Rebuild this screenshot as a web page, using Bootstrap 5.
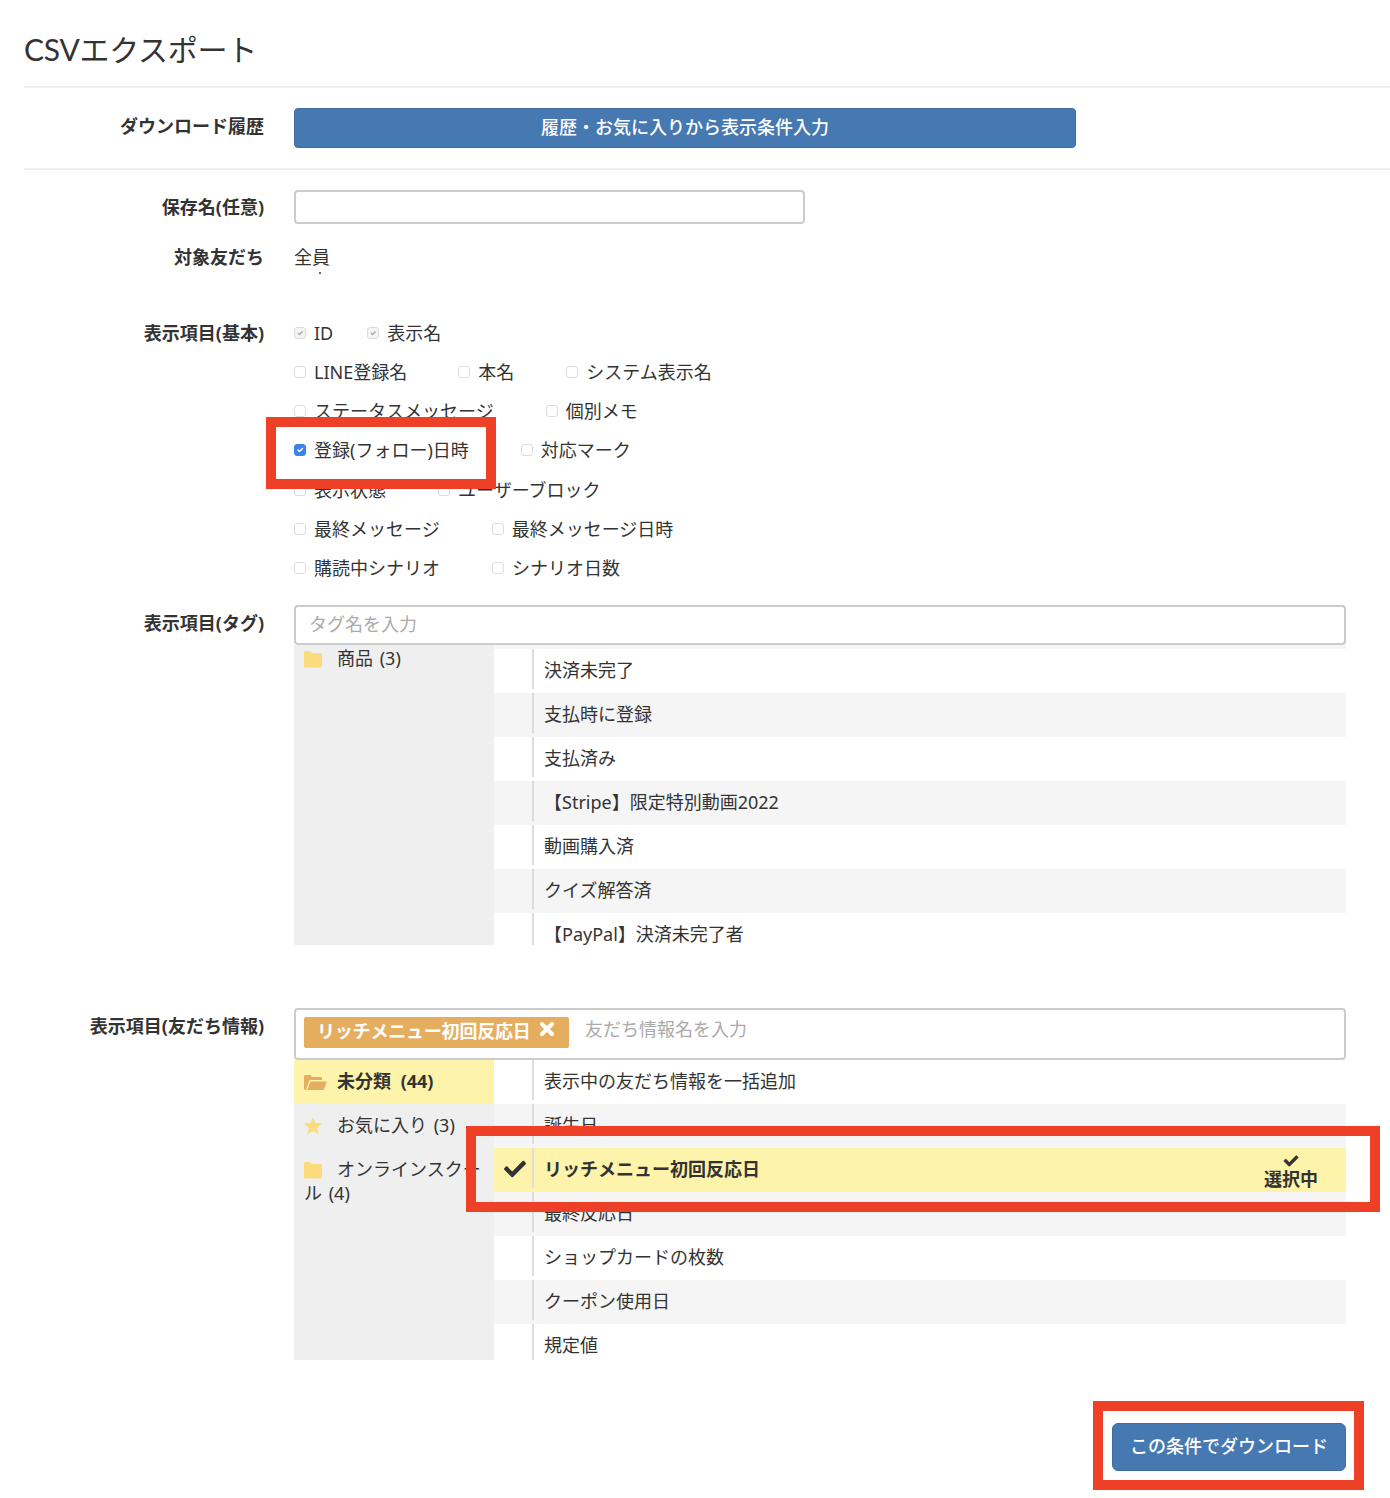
<!DOCTYPE html>
<html lang="ja">
<head>
<meta charset="utf-8">
<title>CSVエクスポート</title>
<link rel="stylesheet" href="https://cdn.jsdelivr.net/npm/bootstrap@5.3.0/dist/css/bootstrap.min.css">
<style>
html,body{margin:0;background:#fff}
body{width:1390px;height:1498px;overflow:hidden;position:relative;color:#333;font-family:"Noto Sans","Noto Sans CJK JP",sans-serif;font-size:18px;line-height:24px;padding-left:24px}
.page-title{font-size:30px;line-height:36px;font-weight:400;margin:0;padding-top:31px;height:86px;color:#333;font-family:Lato,"Noto Sans CJK JP",sans-serif;letter-spacing:-.25px}
.rule{height:2px;background:#eee;margin-right:0}
.frow{display:flex;align-items:flex-start}
.flabel{width:240px;flex:none;text-align:right;font-weight:700;margin-right:30px;color:#333}
.fbody{width:1052px;flex:none}
.row-history{margin-top:20px;margin-bottom:20px}
.row-history .flabel{padding-top:6px}
.btn-site{background:#4679b2;border:1px solid #3f6c9f;color:#fff;border-radius:4px;font-size:18px;line-height:24px;font-weight:500}
.btn-site:hover{background:#4679b2;color:#fff;border-color:#3f6c9f}
.btn-hist{display:block;width:782px;height:40px;padding:5px 0 7px;margin:0}
.row-name{margin-top:20px}
.row-name .flabel{padding-top:5px}
.input-plain{width:511px;height:34px;border:2px solid #ccc;border-radius:4px;box-shadow:none;padding:4px 10px}
.row-target{margin-top:21px;height:48px}
.tiny-dot{width:2px;height:2px;background:#666;margin:3px 0 0 25px}
.row-basic{margin-top:20px}
.row-basic .flabel{padding-top:8px}
.ck-line{height:39.25px;display:flex;align-items:center}
.ck-item{display:flex;align-items:center;margin-right:52px;white-space:nowrap}
.ck-item.tight{margin-right:34px}
.ck-item.snug{margin-right:51px}
.ck-box.form-check-input{width:12px;height:12px;margin:0 8px 0 0;flex:none;border:1px solid #ddd;border-radius:3px;background-color:#fff;opacity:1;box-shadow:none}
.ck-box.form-check-input:checked{background-color:#3b82f0;border-color:#3b82f0}
.ck-box.form-check-input:disabled{background-color:#f4f4f4;border-color:#ddd;opacity:1;background-image:url("data:image/svg+xml,%3csvg xmlns='http://www.w3.org/2000/svg' viewBox='0 0 20 20'%3e%3cpath fill='none' stroke='%23aaa' stroke-width='3' d='m6 10 3 3 6-6'/%3e%3c/svg%3e")}
.row-tags{margin-top:17.25px}
.row-tags .flabel{padding-top:6px}
.tag-input.form-control{height:40px;border:2px solid #ccc;border-radius:4px;font-size:18px;padding:3px 13px 5px;color:#333;box-shadow:none;font-family:inherit}
.tag-input.form-control::placeholder,.friend-input::placeholder{color:#aaa;opacity:1}
.pick{display:flex;height:300px;overflow:hidden}
.pick-side{width:200px;flex:none;background:#efefef}
.pick-list{flex:1;min-width:0}
.side-item{padding:9px 10px 11px;line-height:24px;color:#333;word-spacing:2px}
.side-item.first-cut{padding-top:1px}
.side-item.on{background:#fdf3ab;font-weight:700;word-spacing:5px}
.side-ico{display:inline-block;width:18px;height:18px;margin-right:15px;vertical-align:-3px}
.side-ico.wide{width:23px;margin-right:10px}
.pick-strip{height:4px;background:#f5f5f5}
.pick-row{height:44px;display:flex;background:#fff}
.pick-row.alt{background:#f5f5f5}
.pick-row.on{background:#fdf3ab;font-weight:700}
.pick-mark{width:38px;flex:none;display:flex;align-items:center;justify-content:center;height:42px;padding-left:3px}
.pick-text{flex:1;border-left:2px solid #ddd;height:40px;line-height:42px;padding-left:10px;display:flex;justify-content:space-between}
.pick-state{display:flex;flex-direction:column;align-items:center;margin-right:28px;font-size:18px;line-height:18px;padding-top:6px}
.state-tick{margin-bottom:2px}
.row-friends{margin-top:63px}
.row-friends .flabel{padding-top:6px}
.friend-box{height:52px;border:2px solid #ccc;border-radius:4px;display:flex;align-items:flex-start;padding:7px 8px}
.friend-chip{background:#e5ad5e;color:#fff;font-weight:700;border-radius:2px;height:31px;line-height:28px;padding:0 14px 0 13px;width:265px;display:flex;justify-content:space-between;white-space:nowrap;flex:none;letter-spacing:-.2px}
.friend-input{border:0;outline:0;background:none;font-size:18px;font-family:inherit;margin-left:16px;padding:0;height:24px;flex:1;min-width:0;color:#333}
.pick.tall{height:300px}
.foot{display:flex;justify-content:flex-end;width:1322px;margin-top:63px}
.btn-go{width:234px;height:48px;padding:0 0 2px;border-radius:6px}
.callout{position:absolute;border:10px solid #ee4027;pointer-events:none}
.c1{left:266px;top:417px;width:230px;height:72px}
.c2{left:466px;top:1126px;width:914px;height:86px}
.c3{left:1093px;top:1401px;width:271px;height:89px}
</style>
</head>
<body>
<h1 class="page-title">CSVエクスポート</h1>
<div class="rule"></div>

<div class="frow row-history">
  <div class="flabel">ダウンロード履歴</div>
  <div class="fbody"><button type="button" class="btn btn-site btn-hist">履歴・お気に入りから表示条件入力</button></div>
</div>
<div class="rule"></div>

<div class="frow row-name">
  <label class="flabel" for="saveName">保存名(任意)</label>
  <div class="fbody"><input id="saveName" type="text" class="form-control input-plain"></div>
</div>

<div class="frow row-target">
  <div class="flabel">対象友だち</div>
  <div class="fbody">全員<div class="tiny-dot"></div></div>
</div>

<div class="frow row-basic">
  <div class="flabel">表示項目(基本)</div>
  <div class="fbody">
    <div class="ck-line">
      <label class="ck-item tight"><input class="form-check-input ck-box" type="checkbox" checked disabled>ID</label>
      <label class="ck-item"><input class="form-check-input ck-box" type="checkbox" checked disabled>表示名</label>
    </div>
    <div class="ck-line">
      <label class="ck-item snug"><input class="form-check-input ck-box" type="checkbox">LINE登録名</label>
      <label class="ck-item"><input class="form-check-input ck-box" type="checkbox">本名</label>
      <label class="ck-item"><input class="form-check-input ck-box" type="checkbox">システム表示名</label>
    </div>
    <div class="ck-line">
      <label class="ck-item"><input class="form-check-input ck-box" type="checkbox">ステータスメッセージ</label>
      <label class="ck-item"><input class="form-check-input ck-box" type="checkbox">個別メモ</label>
    </div>
    <div class="ck-line">
      <label class="ck-item"><input class="form-check-input ck-box" type="checkbox" checked>登録(フォロー)日時</label>
      <label class="ck-item"><input class="form-check-input ck-box" type="checkbox">対応マーク</label>
    </div>
    <div class="ck-line">
      <label class="ck-item"><input class="form-check-input ck-box" type="checkbox">表示状態</label>
      <label class="ck-item"><input class="form-check-input ck-box" type="checkbox">ユーザーブロック</label>
    </div>
    <div class="ck-line">
      <label class="ck-item"><input class="form-check-input ck-box" type="checkbox">最終メッセージ</label>
      <label class="ck-item"><input class="form-check-input ck-box" type="checkbox">最終メッセージ日時</label>
    </div>
    <div class="ck-line">
      <label class="ck-item"><input class="form-check-input ck-box" type="checkbox">購読中シナリオ</label>
      <label class="ck-item"><input class="form-check-input ck-box" type="checkbox">シナリオ日数</label>
    </div>
  </div>
</div>

<div class="frow row-tags">
  <div class="flabel">表示項目(タグ)</div>
  <div class="fbody">
    <input type="text" class="form-control tag-input" placeholder="タグ名を入力">
    <div class="pick">
      <div class="pick-side">
        <div class="side-item first-cut"><svg class="side-ico" viewBox="0 0 18 18"><path fill="#fbdb7c" d="M0 2.500C0 1.700.6 1 1.400 1h5L8 3h8.600c.8 0 1.400.6 1.400 1.400V16c0 .8-.6 1.400-1.400 1.400H1.400C.6 17.400 0 16.800 0 16z"/></svg>商品 (3)</div>
      </div>
      <div class="pick-list">
        <div class="pick-strip"></div>
        <div class="pick-row"><div class="pick-mark"></div><div class="pick-text">決済未完了</div></div>
        <div class="pick-row alt"><div class="pick-mark"></div><div class="pick-text">支払時に登録</div></div>
        <div class="pick-row"><div class="pick-mark"></div><div class="pick-text">支払済み</div></div>
        <div class="pick-row alt"><div class="pick-mark"></div><div class="pick-text">【Stripe】限定特別動画2022</div></div>
        <div class="pick-row"><div class="pick-mark"></div><div class="pick-text">動画購入済</div></div>
        <div class="pick-row alt"><div class="pick-mark"></div><div class="pick-text">クイズ解答済</div></div>
        <div class="pick-row"><div class="pick-mark"></div><div class="pick-text">【PayPal】決済未完了者</div></div>
      </div>
    </div>
  </div>
</div>

<div class="frow row-friends">
  <div class="flabel">表示項目(友だち情報)</div>
  <div class="fbody">
    <div class="friend-box">
      <span class="friend-chip">リッチメニュー初回反応日<svg width="16" height="16" viewBox="0 0 16 16" class="mt-1"><path stroke="#fff" stroke-width="4" stroke-linecap="round" d="M3 3l10 10M13 3L3 13"/></svg></span>
      <input type="text" class="friend-input" placeholder="友だち情報名を入力">
    </div>
    <div class="pick tall">
      <div class="pick-side">
        <div class="side-item on"><svg class="side-ico wide" viewBox="0 0 23 18"><path fill="#e5ad5e" d="M0 3.500C0 2.700.6 2 1.400 2h5.200L8 4h8.600c.8 0 1.400.6 1.400 1.400V7H5.500L2 17H1.400C.6 17 0 16.300 0 15.500z"/><path fill="#e5ad5e" d="M6.500 8.500H23l-3.400 8.500H3.200z"/></svg>未分類 (44)</div>
        <div class="side-item"><svg class="side-ico" viewBox="0 0 18 18"><path fill="#fbdb7c" d="M9 0l2.600 6 6.400.6-4.800 4.300 1.400 6.400L9 14l-5.600 3.300 1.400-6.400L0 6.600 6.400 6z"/></svg>お気に入り (3)</div>
        <div class="side-item"><svg class="side-ico" viewBox="0 0 18 18"><path fill="#fbdb7c" d="M0 2.500C0 1.700.6 1 1.400 1h5L8 3h8.600c.8 0 1.400.6 1.400 1.400V16c0 .8-.6 1.400-1.400 1.400H1.400C.6 17.400 0 16.800 0 16z"/></svg>オンラインスクール (4)</div>
      </div>
      <div class="pick-list">
        <div class="pick-row"><div class="pick-mark"></div><div class="pick-text">表示中の友だち情報を一括追加</div></div>
        <div class="pick-row alt"><div class="pick-mark"></div><div class="pick-text">誕生日</div></div>
        <div class="pick-row on">
          <div class="pick-mark"><svg width="22" height="22" viewBox="0 0 512 512"><path fill="#333" d="M173.900 439.400l-166.400-166.400c-10-10-10-26.200 0-36.200l36.200-36.200c10-10 26.200-10 36.200 0L192 312.700 432.100 72.600c10-10 26.200-10 36.200 0l36.200 36.200c10 10 10 26.200 0 36.200l-294.400 294.400c-10 10-26.200 10-36.200 0z"/></svg></div>
          <div class="pick-text"><span>リッチメニュー初回反応日</span>
            <span class="pick-state"><svg class="state-tick" width="18" height="18" viewBox="0 0 512 512"><path fill="#333" stroke="#333" stroke-width="30" d="M173.900 439.400l-166.400-166.400c-10-10-10-26.200 0-36.200l36.200-36.200c10-10 26.200-10 36.200 0L192 312.700 432.100 72.600c10-10 26.200-10 36.200 0l36.200 36.200c10 10 10 26.200 0 36.200l-294.400 294.400c-10 10-26.200 10-36.200 0z"/></svg>選択中</span></div>
        </div>
        <div class="pick-row alt"><div class="pick-mark"></div><div class="pick-text">最終反応日</div></div>
        <div class="pick-row"><div class="pick-mark"></div><div class="pick-text">ショップカードの枚数</div></div>
        <div class="pick-row alt"><div class="pick-mark"></div><div class="pick-text">クーポン使用日</div></div>
        <div class="pick-row"><div class="pick-mark"></div><div class="pick-text">規定値</div></div>
      </div>
    </div>
  </div>
</div>

<div class="foot"><button type="button" class="btn btn-site btn-go">この条件でダウンロード</button></div>

<div class="callout c1"></div>
<div class="callout c2"></div>
<div class="callout c3"></div>
<script src="https://cdn.jsdelivr.net/npm/bootstrap@5.3.0/dist/js/bootstrap.bundle.min.js"></script>
</body>
</html>
